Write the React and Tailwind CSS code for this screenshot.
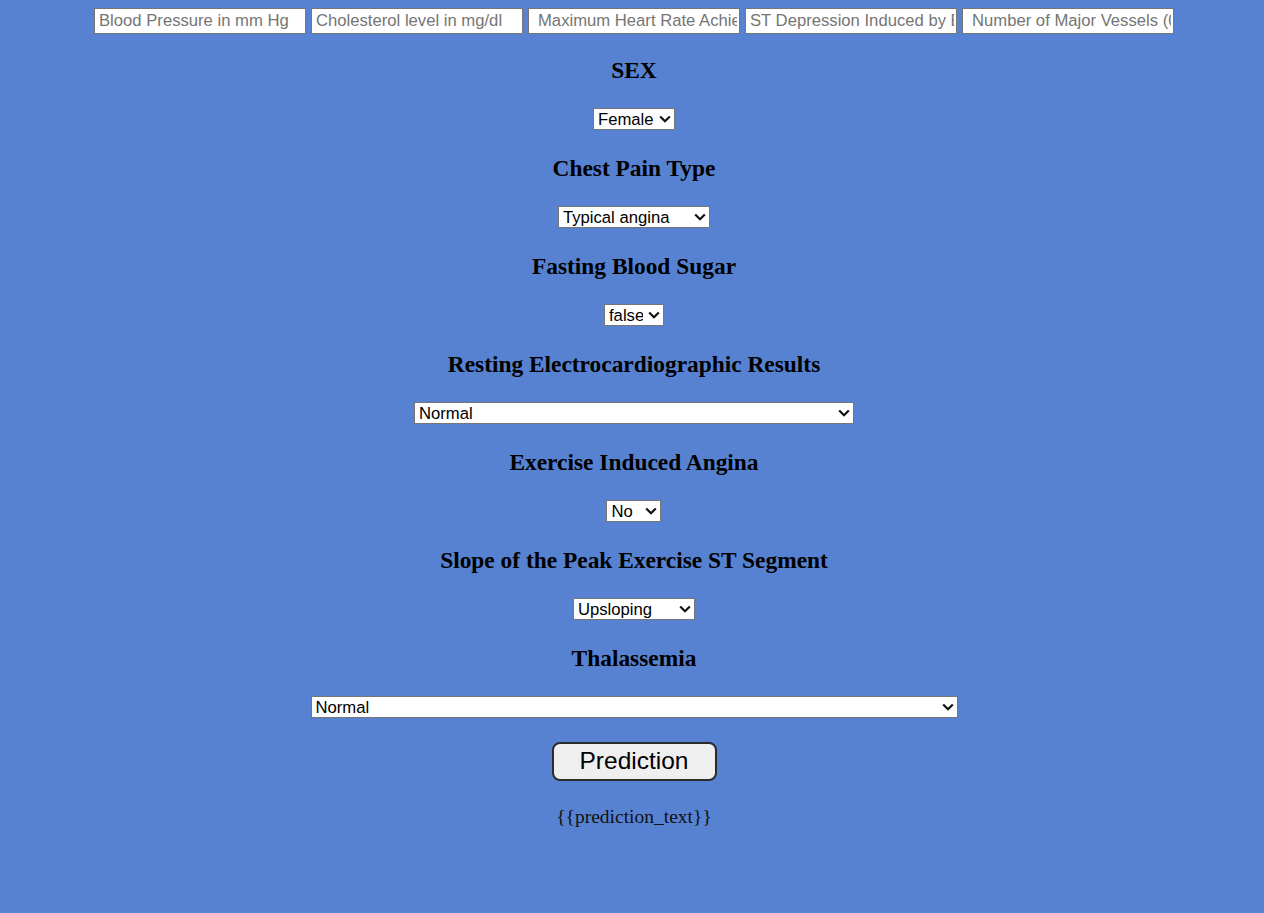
const inputs = [
  { ph: 'Blood Pressure in mm Hg', pad: 'pl-[4px]' },
  { ph: 'Cholesterol level in mg/dl', pad: 'pl-[4px]' },
  { ph: 'Maximum Heart Rate Achieved', pad: 'pl-[9px]' },
  { ph: 'ST Depression Induced by Exercise', pad: 'pl-[4px]' },
  { ph: 'Number of Major Vessels (0-3)', pad: 'pl-[9px]' },
];

const fields = [
  { title: 'SEX', w: 'w-[82px]', options: ['Female', 'Male'] },
  { title: 'Chest Pain Type', w: 'w-[152px]', options: ['Typical angina', 'Atypical angina', 'Non-anginal pain', 'Asymptomatic'] },
  { title: 'Fasting Blood Sugar', w: 'w-[60px]', options: ['false', 'true'] },
  {
    title: 'Resting Electrocardiographic Results',
    w: 'w-[440px]',
    options: ['Normal', 'Having ST-T wave abnormality', "Showing probable or definite left ventricular hypertrophy by Estes' criteria"],
  },
  { title: 'Exercise Induced Angina', w: 'w-[55px]', options: ['No', 'Yes'] },
  { title: 'Slope of the Peak Exercise ST Segment', w: 'w-[122px]', options: ['Upsloping', 'Flat', 'Downsloping'] },
  {
    title: 'Thalassemia',
    w: 'w-[647px]',
    options: ['Normal', 'Fixed defect', 'Reversable defect'],
  },
];

function Chevron() {
  return (
    <svg
      width="12"
      height="8"
      viewBox="0 0 12 8"
      className="pointer-events-none absolute right-[4px] top-1/2 -translate-y-1/2"
    >
      <polyline points="1.2,1.5 6,6.2 10.8,1.5" fill="none" stroke="#111" strokeWidth="2.2" />
    </svg>
  );
}

export default function App() {
  return (
    <div className="min-h-screen bg-[#5682d1] pl-[4px] pt-[8px] text-black">
      <form className="flex flex-col items-center">
        {/* numeric inputs */}
        <div className="flex gap-[5px]">
          {inputs.map(({ ph, pad }) => (
            <input
              key={ph}
              type="text"
              placeholder={ph}
              className={`h-[26px] w-[212px] border border-[#767676] bg-white pr-[2px] ${pad} font-['Liberation_Sans',Arial,sans-serif] text-[16.67px] text-black placeholder:text-[#757575] outline-none`}
            />
          ))}
        </div>

        {fields.map(({ title, w, options }, i) => (
          <div key={title} className="flex flex-col items-center">
            <h3
              className={`${i === 0 ? 'mt-[21px]' : 'mt-[23px]'} h-[30px] font-['Liberation_Serif','Times_New_Roman',serif] text-[23.4px] font-bold leading-[30px]`}
            >
              {title}
            </h3>
            <div className={`relative mt-[23px] ${w}`}>
              <select
                className="block h-[22px] w-full appearance-none border border-[#767676] bg-white pl-[4px] pr-[20px] pt-[1px] font-['Liberation_Sans',Arial,sans-serif] text-[16.67px] leading-[19px] text-black outline-none"
              >
                {options.map((o) => (
                  <option key={o}>{o}</option>
                ))}
              </select>
              <Chevron />
            </div>
          </div>
        ))}

        <button
          type="button"
          className="mt-[24px] h-[39px] w-[165px] rounded-[8px] border-2 border-[#2b2b2b] bg-[#efefef] font-['Liberation_Sans',Arial,sans-serif] text-[24.5px] leading-none text-black"
        >
          Prediction
        </button>

        <p className="mt-[24px] font-['Liberation_Serif','Times_New_Roman',serif] text-[19.5px] leading-[23px] text-[#111]">
          {'{{prediction_text}}'}
        </p>
      </form>
    </div>
  );
}
